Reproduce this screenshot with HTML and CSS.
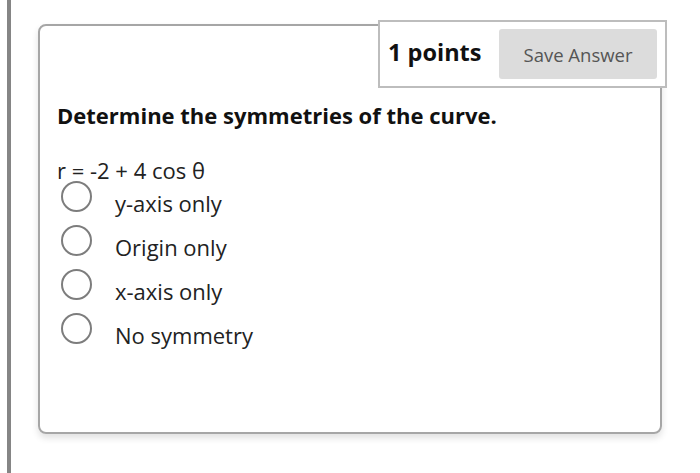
FILE: index.html
```html
<!DOCTYPE html>
<html>
<head>
<meta charset="utf-8">
<link rel="stylesheet" href="styles.css">
</head>
<body>
<div class="page">
  <div class="rail"></div>
  <div class="card">
    <div class="points-box">
      <span class="points">1 points</span>
      <button class="save">Save Answer</button>
    </div>
    <div class="question">Determine the symmetries of the curve.</div>
    <div class="equation">r = -2 + 4 cos θ</div>
    <ul class="options">
      <li class="option"><span class="radio"></span><span class="label">y-axis only</span></li>
      <li class="option"><span class="radio"></span><span class="label">Origin only</span></li>
      <li class="option"><span class="radio"></span><span class="label">x-axis only</span></li>
      <li class="option"><span class="radio"></span><span class="label">No symmetry</span></li>
    </ul>
  </div>
</div>
</body>
</html>
```

FILE: styles.css
```css
* { box-sizing: border-box; }
html, body { margin: 0; padding: 0; background: #fff; }
body { font-family: "Open Sans", "Noto Sans", sans-serif; color: #1f1f1f; }

.page {
  display: flex;
  height: 473px;
  padding-left: 7px;
}

.rail {
  width: 4px;
  height: 473px;
  background: #858585;
  flex: none;
}

.card {
  position: relative;
  margin-left: 27px;
  margin-top: 24px;
  width: 624px;
  height: 410px;
  border: 2px solid #a6a6a6;
  border-radius: 8px;
  box-shadow: 0 4px 7px rgba(0,0,0,0.12);
  padding: 74px 0 0 17px;
}

.points-box {
  position: absolute;
  top: -6px;
  left: 338px;
  width: 289px;
  height: 68px;
  background: #fff;
  border: 2px solid #bdbdbd;
  display: flex;
  align-items: center;
  padding: 0 6px 0 8px;
  justify-content: space-between;
}

.points {
  font-weight: 700;
  font-size: 23.5px;
  color: #111;
  margin-top: -4px;
}

.save {
  width: 158px;
  height: 50px;
  border: none;
  border-radius: 3px;
  background: #dcdcdc;
  color: #555;
  font-family: "Open Sans", "Noto Sans", sans-serif;
  font-size: 18.5px;
  padding: 0;
  margin-right: 2px;
}

.question {
  font-weight: 700;
  font-size: 22px;
  line-height: 30px;
  color: #111;
}

.equation {
  margin-top: 27px;
  font-size: 22px;
  line-height: 26px;
  color: #222;
}

.options {
  list-style: none;
  margin: -2px 0 0 0;
  padding: 0;
}

.option {
  display: flex;
  align-items: flex-start;
  height: 44px;
}

.radio {
  width: 31px;
  height: 31px;
  border: 2.5px solid #7d7d7d;
  border-radius: 50%;
  margin-left: 4px;
  flex: none;
}

.label {
  margin-left: 23px;
  font-size: 22px;
  line-height: 28px;
  margin-top: 8px;
  color: #222;
}
```
